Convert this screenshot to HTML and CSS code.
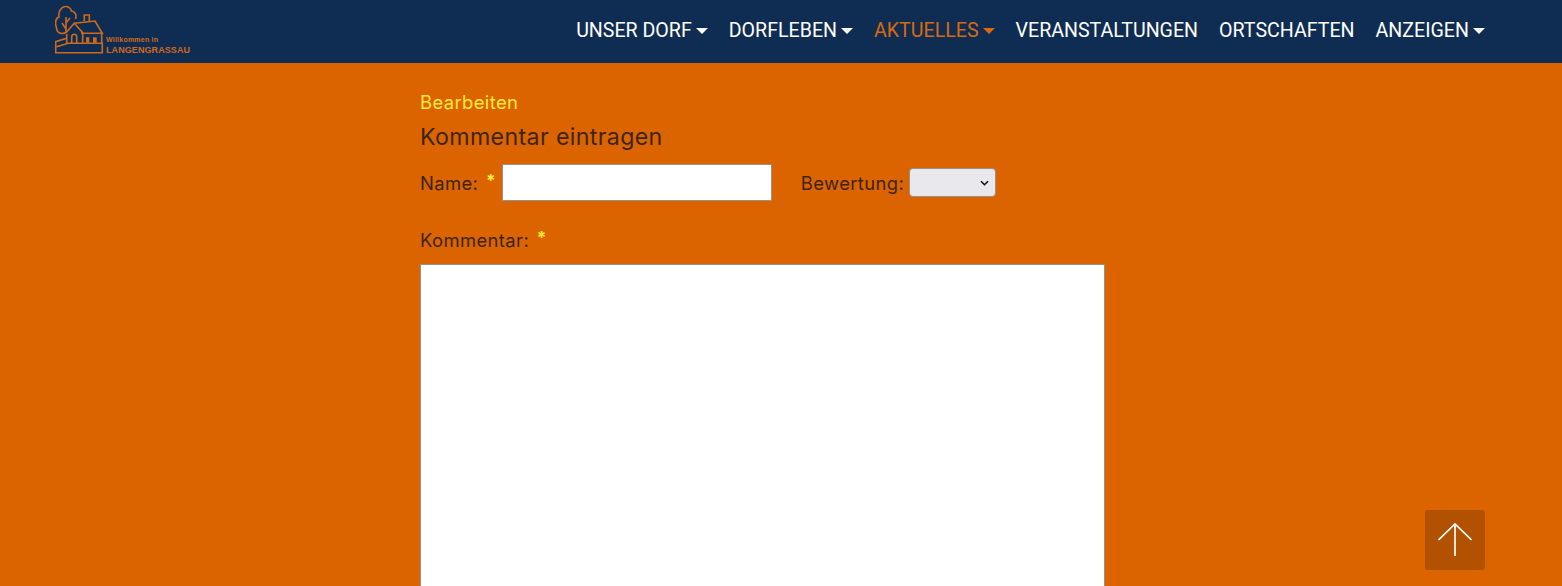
FILE: index.html
```html
<!DOCTYPE html>
<html lang="de">
<head>
<meta charset="utf-8">
<title>Kommentar eintragen</title>
<link rel="stylesheet" href="styles.css">
</head>
<body>
<header class="site-header">
  <a class="logo" href="#">
    <svg class="logo-svg" width="136" height="50" viewBox="0 0 136 50" fill="none" stroke="#cf6a1c" stroke-width="1.6">
      <path d="M11.5 27 C7 30 1.5 28 1.5 22.5 C-0.5 18 1 12.5 4 12 C3 7 6 2 10 1.5 C13 1 16 3.5 16.5 6 C20 6.5 22 10 20.5 14"/>
      <path d="M11 12 V28 M7 18 L11 24 M11 18 L15 13"/>
      <path d="M11 27.7 L19.3 18.3 L28 28 M19.3 18.3 L40 16 L47.3 28.3 H26"/>
      <path d="M11.7 29 V38.3 M27.7 28 V38.3 M46.7 28 V38.3"/>
      <path d="M29.3 16 V10 H34.3 V16"/>
      <path d="M16.7 38.3 V32 A2.5 2.7 0 0 1 21.7 32 V38.3"/>
      <rect x="31" y="32.3" width="3.3" height="5.4" fill="#cf6a1c" stroke="none"/>
      <rect x="38" y="32.3" width="3.7" height="5.4" fill="#cf6a1c" stroke="none"/>
      <path d="M11.7 38.3 H47.3 V47.7 H0.7 V36.7 L11.7 33.3 M1.7 41.7 L13.3 38.3"/>
      <text class="logo-small" x="51" y="36.7" textLength="52" fill="#cf6a1c" stroke="none">Willkommen in</text>
      <text class="logo-big" x="51" y="47.7" textLength="84" fill="#cf6a1c" stroke="none">LANGENGRASSAU</text>
    </svg>
  </a>
  <nav class="nav">
    <a class="nav-link caret" href="#">UNSER DORF</a>
    <a class="nav-link caret" href="#">DORFLEBEN</a>
    <a class="nav-link caret active" href="#">AKTUELLES</a>
    <a class="nav-link" href="#">VERANSTALTUNGEN</a>
    <a class="nav-link" href="#">ORTSCHAFTEN</a>
    <a class="nav-link caret" href="#">ANZEIGEN</a>
  </nav>
</header>
<main class="content">
  <a class="edit-link" href="#">Bearbeiten</a>
  <h2 class="title">Kommentar eintragen</h2>
  <form class="form">
    <div class="row">
      <label class="label" for="name">Name: <span class="req">*</span></label>
      <input class="text-input" id="name" type="text">
      <label class="label rating-label" for="rating">Bewertung:</label>
      <select class="rating" id="rating"><option></option></select>
    </div>
    <label class="label comment-label" for="comment">Kommentar: <span class="req">*</span></label>
    <textarea class="comment" id="comment"></textarea>
  </form>
</main>
<a class="to-top" href="#" aria-label="Nach oben">
  <svg width="34" height="34" viewBox="0 0 34 34" fill="none" stroke="#fff" stroke-width="1.7">
    <path d="M0.5 17 L17 1 L33.5 17"/>
    <path d="M17 1 V33"/>
  </svg>
</a>
</body>
</html>
```
FILE: styles.css
```css
* { box-sizing: border-box; }
html, body { height: 100%; }
body {
  margin: 0;
  overflow: hidden;
  background: #db6400;
  color: #3d2410;
  font-family: "Inter", "Noto Sans", sans-serif;
  font-size: 18.4px;
  letter-spacing: 0.4px;
}
a { text-decoration: none; }
.site-header {
  height: 63px;
  background: #0f2d52;
  display: flex;
  align-items: flex-start;
  justify-content: space-between;
  padding: 0 77px 0 55px;
  letter-spacing: 0;
}
.logo { display: block; margin-top: 5px; line-height: 0; }
.logo-small { font: 700 7px "Liberation Sans", sans-serif; }
.logo-big { font: 700 9px "Liberation Sans", sans-serif; }
.nav { display: flex; gap: 21px; padding-top: 19px; }
.nav-link {
  font-family: "Roboto", sans-serif;
  font-size: 19.6px;
  line-height: 23px;
  color: #fff;
  white-space: nowrap;
}
.nav-link.active { color: #d9690f; }
.caret::after {
  content: "";
  display: inline-block;
  margin-left: 4px;
  vertical-align: 3px;
  border-top: 6px solid currentColor;
  border-left: 6px solid transparent;
  border-right: 6px solid transparent;
}
.content { width: 722px; margin: 0 auto; padding-top: 29px; }
.edit-link { display: block; color: #ffe93b; line-height: 21px; }
.title { margin: 9px 0 0; font-size: 23.2px; letter-spacing: 0.35px; font-weight: 400; line-height: 30px; }
.row { display: flex; align-items: center; margin-top: 12px; height: 37px; }
.label { white-space: nowrap; }
.req { color: #ffe93b; font-weight: 700; margin-left: 2px; vertical-align: 3px; font-size: 17px; line-height: 1; }
.text-input {
  width: 270px; height: 37px; margin-left: 6px;
  background: #fff; border: 1px solid #9a9088; border-radius: 0;
}
.rating-label { margin-left: 29px; }
.rating {
  appearance: none;
  width: 87px; height: 29px; margin-left: 5px;
  background: #e9e9ed url("data:image/svg+xml,%3Csvg xmlns='http://www.w3.org/2000/svg' width='9' height='6' viewBox='0 0 9 6'%3E%3Cpath d='M1 1.2 L4.5 4.7 L8 1.2' fill='none' stroke='%23111' stroke-width='1.6'/%3E%3C/svg%3E") no-repeat right 6px center;
  border: 1px solid #9a9088; border-radius: 4px;
}
.comment-label { display: block; margin-top: 29px; line-height: 21px; }
.comment {
  display: block; width: 685px; height: 400px; margin-top: 13px;
  background: #fff; border: 1px solid #9a9088; border-radius: 0; resize: none;
}
.to-top {
  position: fixed; right: 77px; bottom: 16px;
  width: 60px; height: 60px; border-radius: 3px;
  background: #b25200;
  display: flex; align-items: center; justify-content: center;
}
```
